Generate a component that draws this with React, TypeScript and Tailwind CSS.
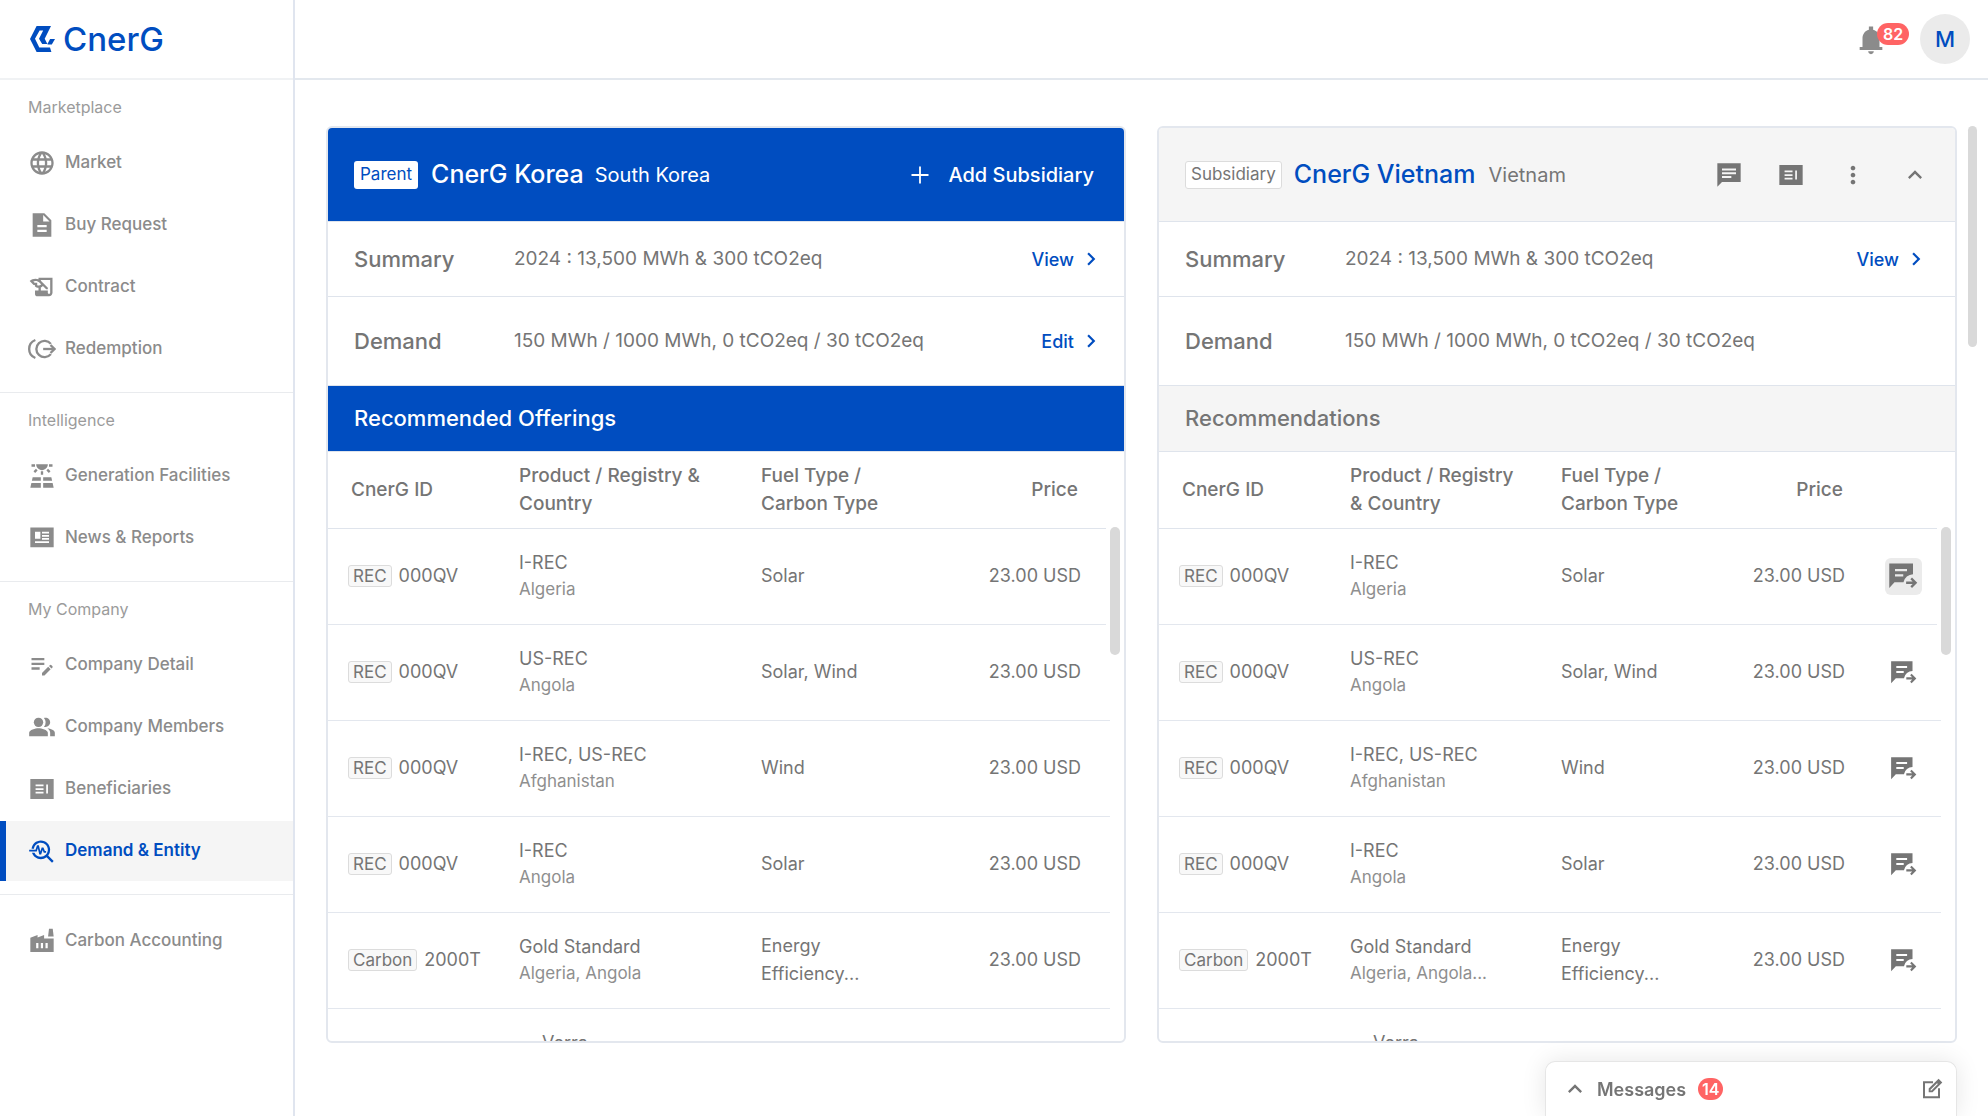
import type { ReactNode } from "react";
import {
  MdChevronRight,
  MdEditNote,
  MdExpandLess,
  MdHistoryEdu,
  MdLanguage,
  MdMoreVert,
  MdPeopleAlt,
  MdSolarPower,
  MdTroubleshoot,
} from "react-icons/md";

type IconProps = { className?: string };

function Svg({ className, children }: { className?: string; children: ReactNode }) {
  return (
    <svg viewBox="0 0 24 24" fill="currentColor" className={className} aria-hidden="true">
      {children}
    </svg>
  );
}

const DocumentIcon = ({ className }: IconProps) => (
  <Svg className={className}>
    <path d="M14 2H4v20h16V8l-6-6zm2 16H8v-2h8v2zm0-4H8v-2h8v2zm-3-5V3.5L18.5 9H13z" />
  </Svg>
);

const RedeemIcon = ({ className }: IconProps) => (
  <Svg className={className}>
    <g fill="none" stroke="currentColor" strokeWidth="2">
      <path d="M19.6 7.6A7 7 0 1 0 19.6 16.4" />
      <path d="M6.3 4.3C3 5.6 1 8.5 1 12s2 6.4 5.3 7.7" />
      <path d="M13 12h9" />
      <path d="M19.3 8.6L22.7 12l-3.4 3.4" />
    </g>
  </Svg>
);

const NewsIcon = ({ className }: IconProps) => (
  <Svg className={className}>
    <path
      fillRule="evenodd"
      d="M2 3h20v17H2zM6 6.7v6h4.6v-6zM12 6.7v1.5h6V6.7zM12 9.5v1.5h6V9.5zM12 12.1v1.5h6v-1.5zM6 14.7v1.6h12v-1.6z"
    />
  </Svg>
);

const ListCardIcon = ({ className }: IconProps) => (
  <Svg className={className}>
    <path
      fillRule="evenodd"
      d="M2 3.5h20v17H2zM6.5 8.2v1.5h6.8V8.2zM6.5 11.3v1.5h6.8v-1.5zM6.5 14.4v1.5h6.8v-1.5zM15.6 8.2v7.7h1.5V8.2z"
    />
  </Svg>
);

const FactoryIcon = ({ className }: IconProps) => (
  <Svg className={className}>
    <path
      fillRule="evenodd"
      d="M2 21.5V9.3l6.2-2.4v2.1l5.6-2.2v3H22v11.7zM7 13.7v4.6h1.9v-4.6zM11 13.7v4.6h1.9v-4.6zM15 13.7v4.6h1.9v-4.6zM17.2 8.1L18 1.5h3.2l.8 6.6z"
    />
  </Svg>
);

const BellIcon = ({ className }: IconProps) => (
  <Svg className={className}>
    <path d="M12 22c1.1 0 2-.9 2-2h-4c0 1.1.9 2 2 2zm6-5v-6c0-3.07-1.63-5.64-4.5-6.32V2.5h-3v2.18C7.64 5.36 6 7.92 6 11v6H4v2h16v-2h-2z" />
  </Svg>
);

const ChatIcon = ({ className }: IconProps) => (
  <Svg className={className}>
    <path d="M22 2H2v20l4-4h16V2zM6 6.4h12v1.7H6V6.4zm8 8.2H6v-1.7h8v1.7zm4-3.3H6V9.7h12v1.6z" />
  </Svg>
);

const ForwardChatIcon = ({ className }: IconProps) => (
  <Svg className={className}>
    <path d="M1 2h19v8.6a8 8 0 0 0-7.6 6.4H5.2L1 21.5V2zM5.6 6.3v1.8h9.6V6.3H5.6zm0 4.3v1.8h6.6v-1.8H5.6z" />
    <path d="M14.5 16.3h5.2l-1.8-1.8 1.3-1.4 4.2 4.2-4.2 4.3-1.3-1.4 1.8-1.9h-5.2z" />
  </Svg>
);

const PlusIcon = ({ className }: IconProps) => (
  <Svg className={className}>
    <path d="M11.1 3.5h1.8v7.6h7.6v1.8h-7.6v7.6h-1.8v-7.6H3.5v-1.8h7.6z" />
  </Svg>
);

const ComposeIcon = ({ className }: IconProps) => (
  <Svg className={className}>
    <path d="M13 4.2v2H5v13h13v-8h2v10H3v-17z" />
    <path
      fillRule="evenodd"
      d="M18.6 1.7l3.7 3.7-9.8 9.8H8.7v-3.7zM17 6.2l-6.5 6.5v.9h.9l6.5-6.5z"
    />
  </Svg>
);

function Logo() {
  return (
    <a href="#" className="flex items-center gap-2 text-[#004dc0]">
      <svg
        viewBox="0 0 25 26"
        className="h-[26px] w-[25px]"
        fill="currentColor"
        aria-hidden="true"
      >
        <path d="M6.6 0H21l-6.3 12.8 2.7 5.2h-5.2L9 12.8l4.2-8.4H9.6L5 12.8l4.3 8.8H20L21.4 26H6.6L0 12.9z" />
        <path d="M17.4 18l2.7-5H25l-3.2 5.6h-4.1z" />
      </svg>
      <span className="text-[33px] font-medium leading-[40px]">CnerG</span>
    </a>
  );
}

type NavItem = { label: string; icon: (p: IconProps) => ReactNode; active?: boolean };

const navSections: { title?: string; items: NavItem[] }[] = [
  {
    title: "Marketplace",
    items: [
      { label: "Market", icon: MdLanguage },
      { label: "Buy Request", icon: DocumentIcon },
      { label: "Contract", icon: MdHistoryEdu },
      { label: "Redemption", icon: RedeemIcon },
    ],
  },
  {
    title: "Intelligence",
    items: [
      { label: "Generation Facilities", icon: MdSolarPower },
      { label: "News & Reports", icon: NewsIcon },
    ],
  },
  {
    title: "My Company",
    items: [
      { label: "Company Detail", icon: MdEditNote },
      { label: "Company Members", icon: MdPeopleAlt },
      { label: "Beneficiaries", icon: ListCardIcon },
      { label: "Demand & Entity", icon: MdTroubleshoot, active: true },
    ],
  },
  { items: [{ label: "Carbon Accounting", icon: FactoryIcon }] },
];

function Sidebar() {
  return (
    <aside className="flex w-[295px] shrink-0 flex-col border-r-2 border-[#e0e5ef]">
      <div className="flex h-20 items-center border-b-2 border-[#f0f2f4] pl-[30px]">
        <Logo />
      </div>
      <nav>
        {navSections.map((section, i) => (
          <section
            key={i}
            className={i === 0 ? "pb-[13px]" : "border-t border-[#e9ebee] pb-[13px]"}
          >
            {section.title ? (
              <h2 className="flex h-[53px] items-center pl-7 text-[16px] text-[#9b9b9b]">
                {section.title}
              </h2>
            ) : (
              <div className="h-4" />
            )}
            <ul className="flex flex-col gap-[2px]">
              {section.items.map(({ label, icon: Icon, active }) => (
                <li key={label}>
                  <a
                    href="#"
                    aria-current={active ? "page" : undefined}
                    className={
                      active
                        ? "flex h-[60px] items-center gap-[9px] border-l-[6px] border-[#004dc0] bg-[#f5f5f5] pl-[22px] text-[17px] font-semibold text-[#004dc0]"
                        : "flex h-[60px] items-center gap-[9px] pl-7 text-[17px] font-medium text-[#8b8b8b]"
                    }
                  >
                    <Icon className="size-7" />
                    {label}
                  </a>
                </li>
              ))}
            </ul>
          </section>
        ))}
      </nav>
    </aside>
  );
}

function TopBar() {
  return (
    <header className="flex h-20 shrink-0 items-center justify-end gap-8 border-b-2 border-[#e3e8ee] pr-[18px]">
      <button type="button" aria-label="Notifications" className="relative pt-[2px] text-[#8b8b8b]">
        <BellIcon className="size-[34px]" />
        <span className="absolute left-[23px] top-[2px] flex h-[22px] items-center rounded-full bg-[#ff6464] px-[6px] text-[16px] font-semibold text-white">
          82
        </span>
      </button>
      <button
        type="button"
        aria-label="Account"
        className="flex size-[50px] items-center justify-center rounded-full bg-[#ebebeb] text-[22px] font-medium text-[#004dc0]"
      >
        M
      </button>
    </header>
  );
}

function InfoRow({
  label,
  value,
  action,
  className,
}: {
  label: string;
  value: string;
  action?: string;
  className: string;
}) {
  return (
    <div className={`flex shrink-0 items-center border-t border-[#dfe4ec] pl-[26px] ${className}`}>
      <h3 className="w-40 shrink-0 text-[22px] font-medium">{label}</h3>
      <p className="grow text-[19px]">{value}</p>
      {action && (
        <a
          href="#"
          className="flex items-center gap-1 text-[18px] font-medium text-[#004dc0]"
        >
          {action}
          <MdChevronRight className="size-[26px]" />
        </a>
      )}
    </div>
  );
}

type Offer = {
  kind?: string;
  id?: string;
  product: string;
  country: string;
  fuel: string[];
  price?: string;
};

const offers: Offer[] = [
  { kind: "REC", id: "000QV", product: "I-REC", country: "Algeria", fuel: ["Solar"], price: "23.00 USD" },
  { kind: "REC", id: "000QV", product: "US-REC", country: "Angola", fuel: ["Solar, Wind"], price: "23.00 USD" },
  { kind: "REC", id: "000QV", product: "I-REC, US-REC", country: "Afghanistan", fuel: ["Wind"], price: "23.00 USD" },
  { kind: "REC", id: "000QV", product: "I-REC", country: "Angola", fuel: ["Solar"], price: "23.00 USD" },
  { kind: "Carbon", id: "2000T", product: "Gold Standard", country: "Algeria, Angola", fuel: ["Energy", "Efficiency..."], price: "23.00 USD" },
  { product: "Verra", country: "", fuel: [] },
];

function Lines({ lines }: { lines: string[] }) {
  return lines.map((line) => (
    <span key={line} className="block">
      {line}
    </span>
  ));
}

function OfferTable({ subsidiary = false }: { subsidiary?: boolean }) {
  return (
    <div className="relative min-h-0 grow overflow-hidden border-t border-[#dfe4ec] pr-[14px]">
      <table className="w-full table-fixed border-collapse text-left text-[18px] leading-7">
        <thead>
          <tr className="h-[76px] border-b border-[#dfe4ec] text-[19px]">
            <th className="w-[191px] pl-[23px] font-medium">CnerG ID</th>
            <th className={subsidiary ? "w-[211px] font-medium" : "w-[242px] font-medium"}>
              <Lines
                lines={
                  subsidiary
                    ? ["Product / Registry", "& Country"]
                    : ["Product / Registry &", "Country"]
                }
              />
            </th>
            <th className={subsidiary ? "w-[180px] font-medium" : "w-[200px] font-medium"}>
              <Lines lines={["Fuel Type /", "Carbon Type"]} />
            </th>
            <th
              className={
                subsidiary ? "pr-[22px] text-right font-medium" : "pr-8 text-right font-medium"
              }
            >
              Price
            </th>
            {subsidiary && <th className="w-[76px]" aria-label="Forward" />}
          </tr>
        </thead>
        <tbody>
          {offers.map((offer, i) => (
            <tr key={i} className="h-24 border-b border-[#e3e7ee]">
              <td className="pl-5">
                {offer.id && (
                  <div className="flex items-center gap-[7px]">
                    <span className="flex h-[22px] items-center rounded-[3px] border border-[#dcdcdc] bg-[#f8f8f8] px-1 text-[17px]">
                      {offer.kind}
                    </span>
                    {offer.id}
                  </div>
                )}
              </td>
              <td className={offer.id ? "leading-[27px]" : "pl-[23px] leading-[27px]"}>
                <div>{offer.product}</div>
                <div className="h-[27px] text-[17px] text-[#8f8f8f]">
                  {offer.country}
                  {subsidiary && offer.kind === "Carbon" ? "..." : ""}
                </div>
              </td>
              <td>
                <Lines lines={offer.fuel} />
              </td>
              <td className={subsidiary ? "pr-5 text-right" : "pr-[29px] text-right"}>
                {offer.price}
              </td>
              {subsidiary && (
                <td>
                  {offer.id && (
                    <button
                      type="button"
                      aria-label="Forward to subsidiary"
                      className={
                        i === 0
                          ? "mx-auto flex size-[37px] items-center justify-center rounded-md bg-[#ebebeb]"
                          : "mx-auto flex size-[37px] items-center justify-center rounded-md"
                      }
                    >
                      <ForwardChatIcon className={i === 0 ? "size-[30px]" : "size-[27px]"} />
                    </button>
                  )}
                </td>
              )}
            </tr>
          ))}
        </tbody>
      </table>
      <div className="absolute right-1 top-[75px] bg-white pl-1">
        <div className="h-32 w-[10px] rounded-full bg-[#d9d9d9]" />
      </div>
    </div>
  );
}

const cardClass =
  "flex min-w-0 flex-1 flex-col overflow-hidden rounded-md border-2 border-[#e3e7ee] bg-white text-[#757575]";

function ParentCard() {
  return (
    <article className={cardClass}>
      <header className="flex h-[93px] shrink-0 items-center bg-[#004dc0] pl-[26px] pr-[30px] text-white">
        <span className="mr-[13px] flex h-7 items-center rounded-[3px] bg-white px-[6px] text-[17px] text-[#004dc0]">
          Parent
        </span>
        <h2 className="mr-[11px] text-[25px] font-medium">CnerG Korea</h2>
        <span className="grow text-[20px]">South Korea</span>
        <button type="button" className="flex items-center gap-4 text-[20px] font-medium">
          <PlusIcon className="size-6" />
          Add Subsidiary
        </button>
      </header>
      <InfoRow
        label="Summary"
        value="2024 : 13,500 MWh & 300 tCO2eq"
        action="View"
        className="h-[75px] pr-5"
      />
      <InfoRow
        label="Demand"
        value="150 MWh / 1000 MWh, 0 tCO2eq / 30 tCO2eq"
        action="Edit"
        className="h-[89px] pr-5"
      />
      <h3 className="flex h-[66px] shrink-0 items-center border-t border-[#dfe4ec] bg-[#004dc0] pl-[26px] text-[22px] font-medium text-white">
        Recommended Offerings
      </h3>
      <OfferTable />
    </article>
  );
}

function SubsidiaryCard() {
  return (
    <article className={cardClass}>
      <header className="flex h-[93px] shrink-0 items-center bg-[#f5f5f5] pl-[26px] pr-[26px]">
        <span className="mr-3 flex h-7 items-center rounded-[3px] border border-[#dcdcdc] bg-white px-[5px] text-[17px]">
          Subsidiary
        </span>
        <h2 className="mr-[13px] text-[25px] font-medium text-[#004dc0]">CnerG Vietnam</h2>
        <span className="grow text-[20px]">Vietnam</span>
        <div className="flex gap-[34px]">
          <button type="button" aria-label="Chat">
            <ChatIcon className="size-7" />
          </button>
          <button type="button" aria-label="Details">
            <ListCardIcon className="size-7" />
          </button>
          <button type="button" aria-label="More">
            <MdMoreVert className="size-7" />
          </button>
          <button type="button" aria-label="Collapse">
            <MdExpandLess className="size-7" />
          </button>
        </div>
      </header>
      <InfoRow
        label="Summary"
        value="2024 : 13,500 MWh & 300 tCO2eq"
        action="View"
        className="h-[75px] pr-[26px]"
      />
      <InfoRow
        label="Demand"
        value="150 MWh / 1000 MWh, 0 tCO2eq / 30 tCO2eq"
        className="h-[89px] pr-[26px]"
      />
      <h3 className="flex h-[66px] shrink-0 items-center border-t border-[#dfe4ec] bg-[#f5f5f5] pl-[26px] text-[22px] font-medium">
        Recommendations
      </h3>
      <OfferTable subsidiary />
    </article>
  );
}

function MessagesDock() {
  return (
    <div className="fixed bottom-0 right-[31px] flex h-[55px] w-[412px] items-center rounded-t-[10px] border border-b-0 border-[#e6e6e6] bg-white pl-[15px] pr-3 text-[#757575] shadow-[0_0_24px_rgba(0,0,0,0.1)]">
      <button type="button" className="flex grow items-center text-[18px] font-semibold">
        <MdExpandLess className="mr-2 size-7" />
        Messages
        <span className="ml-3 flex h-[22px] w-[25px] items-center justify-center rounded-full bg-[#ff6464] text-[16px] text-white">
          14
        </span>
      </button>
      <button type="button" aria-label="New message">
        <ComposeIcon className="size-6" />
      </button>
    </div>
  );
}

export default function App() {
  return (
    <div className="flex h-screen bg-white font-['Inter',sans-serif]">
      <Sidebar />
      <div className="flex min-w-0 grow flex-col">
        <TopBar />
        <main className="relative flex min-h-0 grow gap-[31px] px-[31px] pb-[73px] pt-[46px]">
          <ParentCard />
          <SubsidiaryCard />
          <div className="absolute right-[11px] top-[46px] h-[221px] w-[9px] rounded-full bg-[#d9d9d9]" />
        </main>
      </div>
      <MessagesDock />
    </div>
  );
}
